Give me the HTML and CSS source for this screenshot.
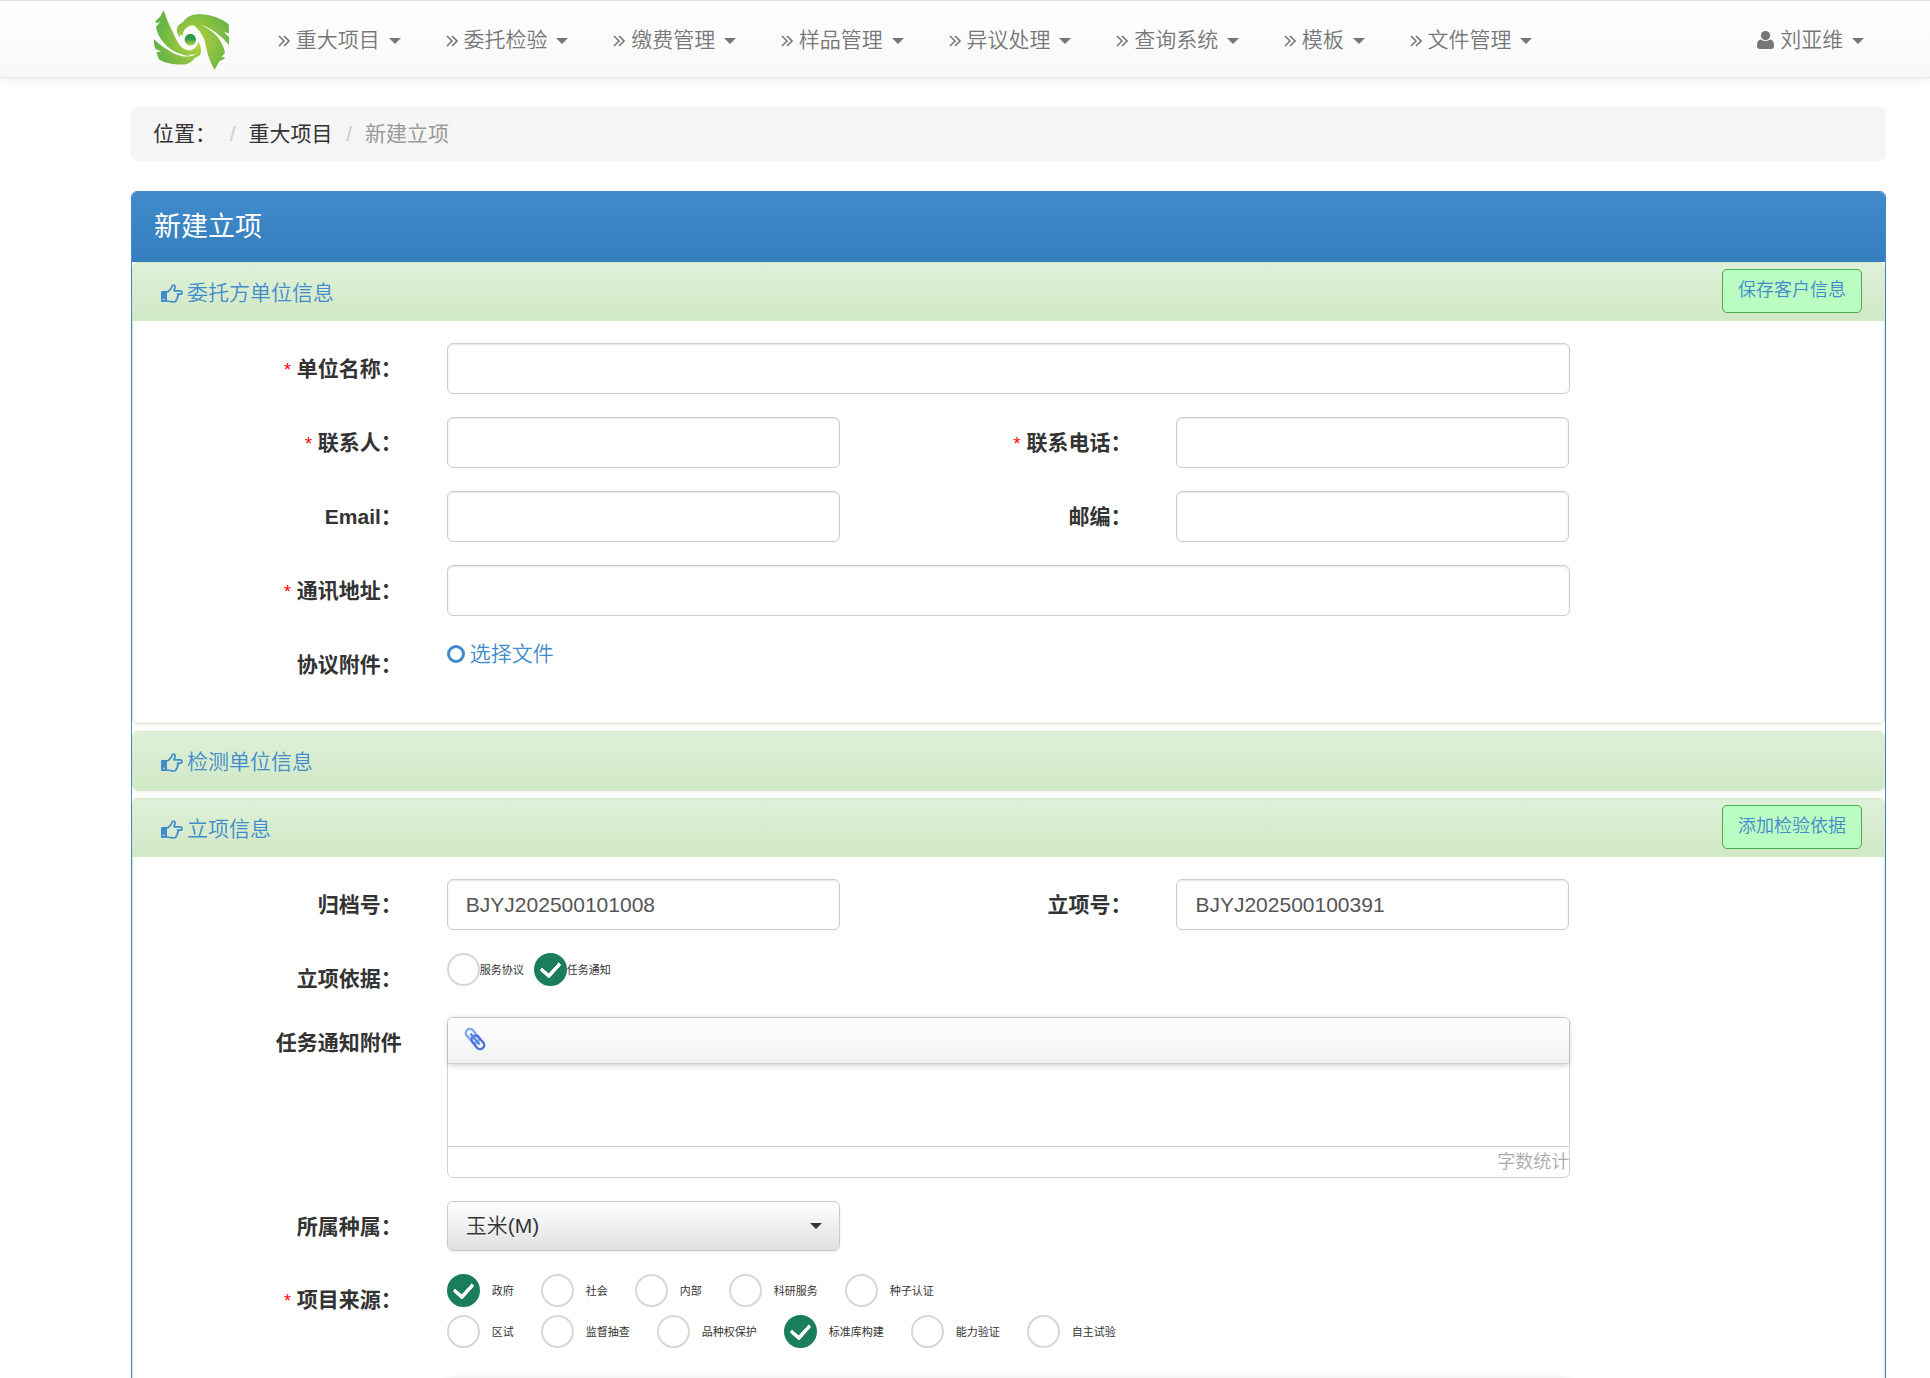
FILE: index.html
```html
<!DOCTYPE html>
<html lang="zh-CN">
<head>
    <meta charset="UTF-8">
    <meta name="viewport" content="width=device-width, initial-scale=1.0">
    <title>新建立项</title>
    <link rel="stylesheet" href="styles.css">
</head>
<body>
    <!-- shared icons -->
    <svg class="icon-defs" width="0" height="0">
        <symbol id="icon-angle" viewBox="0 0 12 12">
            <path d="M1 1l5 5-5 5M6 1l5 5-5 5" fill="none" stroke="currentColor" stroke-width="1.6"/>
        </symbol>
        <symbol id="icon-user" viewBox="0 0 17 18">
            <circle cx="8.5" cy="4.6" r="4.6" fill="currentColor"/>
            <path d="M4 8.6q4.500 3 9 0c3 .4 4 3 4 6.200q0 3.200-3 3.200H3q-3 0-3-3.200c0-3.200 1-5.800 4-6.200z" fill="currentColor"/>
        </symbol>
        <symbol id="icon-hand" viewBox="0 0 22 19">
            <path d="M0 8q0-1 1-1h5v11H1q-1 0-1-1z" fill="currentColor"/>
            <path d="M6 8c2-.2 3-2.200 4.200-3.800C11 3 10.800 1.200 12.400 1.200c2 0 2 2 1.300 3.600L13 6.800h6.200c2.400 0 2.400 3.400 0 3.400H16.500c1.200 1.200.8 2.500-.3 2.900.6 1.200 0 2.300-1 2.600.2 1.500-.8 2.300-2.500 2.300-2.700 0-4-1-6.700-1" fill="none" stroke="currentColor" stroke-width="1.700" stroke-linejoin="round"/>
            <circle cx="2.800" cy="15.200" r=".8" fill="#dff0d8"/>
        </symbol>
    </svg>

    <nav class="navbar">
        <a class="brand" href="#" aria-label="首页">
            <svg width="75" height="60" viewBox="42 30 225 180">
                <defs>
                    <radialGradient id="leaf" gradientUnits="userSpaceOnUse" cx="165" cy="125" r="110">
                        <stop offset="0" stop-color="#b9d33c"/>
                        <stop offset="1" stop-color="#69b545"/>
                    </radialGradient>
                    <linearGradient id="eye" x1="0" y1="0" x2="0" y2="1">
                        <stop offset="0.45" stop-color="#2f9a4a"/>
                        <stop offset="1" stop-color="#c5d83f"/>
                    </linearGradient>
                </defs>
                <path fill="url(#leaf)" d="M71 31L60 50 46 64l3 6 12-5-13 15c4 32 33 66 64 78 15 6 30 10 38 10-22-14-38-40-50-68C88 76 78 52 71 31z"/>
                <path fill="url(#leaf)" d="M42 117c12 14 42 36 69 47 25 9 49 7 61-6 4-8 4-20 3-34 9 16 10 31 5 41-8 5-16 8-20 14-14 15-32 16-54 14-21-2-41-8-50-16l-7-20 15-3-17-6c-5-9-6-19-5-31z"/>
                <path fill="url(#leaf)" d="M72 60c14 40 36 74 62 88 16 8 32 2 41-20 4 16 0 28-8 34-26 8-56-4-76-32C80 112 72 86 72 60z"/>
                <path fill="url(#leaf)" d="M224 209l14-25 15-8 1-5-10 1 11-14c-6-31-26-58-55-74-16-8-35-14-44-12 16 10 32 32 38 50 6 30 14 62 30 87z"/>
                <path fill="url(#leaf)" d="M267 135c-13-17-42-43-69-55-27-8-51-7-60 5-7 6-10 14-9 22l-8-4-1 9c-10-13-12-25-6-34 6-7 16-10 19-17 14-17 32-19 54-18 33 3 62 15 79 30l1 27-15-4 15 16z"/>
                <ellipse cx="151" cy="119" rx="17" ry="18" fill="url(#eye)"/>
            </svg>
        </a>
        <ul class="nav">
            <li><a href="#"><svg class="angle"><use href="#icon-angle"/></svg> 重大项目 <span class="caret"></span></a></li>
            <li><a href="#"><svg class="angle"><use href="#icon-angle"/></svg> 委托检验 <span class="caret"></span></a></li>
            <li><a href="#"><svg class="angle"><use href="#icon-angle"/></svg> 缴费管理 <span class="caret"></span></a></li>
            <li><a href="#"><svg class="angle"><use href="#icon-angle"/></svg> 样品管理 <span class="caret"></span></a></li>
            <li><a href="#"><svg class="angle"><use href="#icon-angle"/></svg> 异议处理 <span class="caret"></span></a></li>
            <li><a href="#"><svg class="angle"><use href="#icon-angle"/></svg> 查询系统 <span class="caret"></span></a></li>
            <li><a href="#"><svg class="angle"><use href="#icon-angle"/></svg> 模板 <span class="caret"></span></a></li>
            <li><a href="#"><svg class="angle"><use href="#icon-angle"/></svg> 文件管理 <span class="caret"></span></a></li>
        </ul>
        <ul class="nav nav-right">
            <li><a href="#"><svg class="user"><use href="#icon-user"/></svg> 刘亚维 <span class="caret"></span></a></li>
        </ul>
    </nav>

    <main class="container">
        <ol class="breadcrumb">
            <li>位置：</li>
            <li><a href="#">重大项目</a></li>
            <li class="active">新建立项</li>
        </ol>

        <form class="panel-primary">
            <h1 class="panel-title">新建立项</h1>

            <section class="panel">
                <div class="panel-heading">
                    <a href="#"><svg class="hand"><use href="#icon-hand"/></svg>委托方单位信息</a>
                    <button type="button" class="btn">保存客户信息</button>
                </div>
                <div class="panel-body">
                    <div class="form-group">
                        <label class="control-label" for="company"><span class="required">*</span> 单位名称：</label>
                        <div class="col-8"><input class="form-control" type="text" id="company"></div>
                    </div>
                    <div class="form-group">
                        <label class="control-label" for="contact"><span class="required">*</span> 联系人：</label>
                        <div class="col-3"><input class="form-control" type="text" id="contact"></div>
                        <label class="control-label" for="phone"><span class="required">*</span> 联系电话：</label>
                        <div class="col-3"><input class="form-control" type="text" id="phone"></div>
                    </div>
                    <div class="form-group">
                        <label class="control-label" for="email">Email：</label>
                        <div class="col-3"><input class="form-control" type="text" id="email"></div>
                        <label class="control-label" for="zip">邮编：</label>
                        <div class="col-3"><input class="form-control" type="text" id="zip"></div>
                    </div>
                    <div class="form-group">
                        <label class="control-label" for="address"><span class="required">*</span> 通讯地址：</label>
                        <div class="col-8"><input class="form-control" type="text" id="address"></div>
                    </div>
                    <div class="form-group">
                        <span class="control-label">协议附件：</span>
                        <div class="col-8"><a class="file-link" href="#"><span class="ring"></span>选择文件</a></div>
                    </div>
                </div>
            </section>

            <section class="panel">
                <div class="panel-heading">
                    <a href="#"><svg class="hand"><use href="#icon-hand"/></svg>检测单位信息</a>
                </div>
            </section>

            <section class="panel">
                <div class="panel-heading">
                    <a href="#"><svg class="hand"><use href="#icon-hand"/></svg>立项信息</a>
                    <button type="button" class="btn">添加检验依据</button>
                </div>
                <div class="panel-body">
                    <div class="form-group">
                        <label class="control-label" for="archiveNo">归档号：</label>
                        <div class="col-3"><input class="form-control" type="text" id="archiveNo" value="BJYJ202500101008"></div>
                        <label class="control-label" for="projectNo">立项号：</label>
                        <div class="col-3"><input class="form-control" type="text" id="projectNo" value="BJYJ202500100391"></div>
                    </div>
                    <div class="form-group">
                        <span class="control-label">立项依据：</span>
                        <div class="col-8 radios">
                            <label><input type="radio" name="basis">服务协议</label>
                            <label><input type="radio" name="basis" checked>任务通知</label>
                        </div>
                    </div>
                    <div class="form-group">
                        <label class="control-label" for="notice">任务通知附件</label>
                        <div class="col-8">
                            <div class="editor">
                                <div class="editor-toolbar">
                                    <button type="button" class="clip" aria-label="附件">
                                        <svg width="22" height="24" viewBox="0 0 22 24" fill="none" stroke-linecap="round">
                                            <g transform="rotate(-40 11 12)">
                                                <rect x="7" y="0" width="8" height="16" rx="4" stroke="#7fa9f3" stroke-width="2.400"/>
                                                <rect x="7" y="9" width="8" height="15" rx="4" stroke="#4a72d8" stroke-width="2.400"/>
                                                <path d="M11 6v12" stroke="#5b86e5" stroke-width="2.600"/>
                                            </g>
                                        </svg>
                                    </button>
                                </div>
                                <textarea id="notice"></textarea>
                                <div class="editor-footer">字数统计</div>
                            </div>
                        </div>
                    </div>
                    <div class="form-group">
                        <label class="control-label" for="species">所属种属：</label>
                        <div class="col-3">
                            <div class="select-wrap">
                                <select id="species">
                                    <option>玉米(M)</option>
                                </select>
                            </div>
                        </div>
                    </div>
                    <div class="form-group">
                        <span class="control-label"><span class="required">*</span> 项目来源：</span>
                        <div class="col-8 sources">
                            <div class="source-row">
                                <label><input type="checkbox" checked>政府</label>
                                <label><input type="checkbox">社会</label>
                                <label><input type="checkbox">内部</label>
                                <label><input type="checkbox">科研服务</label>
                                <label><input type="checkbox">种子认证</label>
                            </div>
                            <div class="source-row">
                                <label><input type="checkbox">区试</label>
                                <label><input type="checkbox">监督抽查</label>
                                <label><input type="checkbox">品种权保护</label>
                                <label><input type="checkbox" checked>标准库构建</label>
                                <label><input type="checkbox">能力验证</label>
                                <label><input type="checkbox">自主试验</label>
                            </div>
                        </div>
                    </div>
                    <div class="form-group">
                        <span class="control-label"></span>
                        <div class="col-8">
                            <div class="editor">
                                <div class="editor-toolbar"></div>
                                <textarea></textarea>
                            </div>
                        </div>
                    </div>
                </div>
            </section>
        </form>
    </main>
</body>
</html>
```
FILE: styles.css
```css
:root {
    --primary-color: #428bca;
    --text-color: #333;
    --muted-color: #777;
    --border-color: #ccc;
    --success-border: #d6e9c6;
    --check-color: #1b7e5a;
}

* {
    box-sizing: border-box;
}

body {
    margin: 0;
    height: 100vh;
    overflow: hidden;
    background: #fff;
    font-family: "Liberation Sans", "Noto Sans CJK SC", sans-serif;
    font-size: 21px;
    font-weight: 350;
    line-height: 30px;
    color: var(--text-color);
}

a {
    color: var(--primary-color);
    text-decoration: none;
}

ul, ol {
    list-style: none;
    margin: 0;
    padding: 0;
}

button, input, select, textarea {
    font: inherit;
    color: inherit;
}

.icon-defs {
    display: block;
}

/* navbar */
.navbar {
    display: flex;
    align-items: center;
    height: 78px;
    padding: 2px 44px 0 154px;
    border-top: 1px solid #e0e0e0;
    border-bottom: 1px solid #e5e5e5;
    background: linear-gradient(#fff, #f8f8f8);
    box-shadow: 0 2px 8px rgba(0, 0, 0, 0.07);
}

.brand {
    display: flex;
    margin-right: 26px;
}

.nav {
    display: flex;
}

.nav a {
    display: block;
    padding: 0 22px 0 23px;
    color: var(--muted-color);
    white-space: nowrap;
}

.nav-right {
    margin-left: auto;
}

.angle {
    width: 12px;
    height: 12px;
}

.user {
    width: 17px;
    height: 18px;
    vertical-align: -2px;
}

.caret {
    display: inline-block;
    margin-left: 3px;
    vertical-align: middle;
    border-top: 6px solid;
    border-left: 6px solid transparent;
    border-right: 6px solid transparent;
}

.container {
    padding: 29px 44px 0 131px;
}

/* breadcrumb */
.breadcrumb {
    padding: 12px 22px;
    margin-bottom: 30px;
    background: #f5f5f5;
    border-radius: 6px;
    font-weight: 400;
}

.breadcrumb li {
    display: inline-block;
}

.breadcrumb li + li::before {
    content: "/\00a0";
    padding: 0 7px 0 8px;
    color: var(--border-color);
}

.breadcrumb a {
    color: var(--text-color);
}

.breadcrumb .active {
    color: #999;
}

/* panels */
.panel-primary {
    border: 1px solid var(--primary-color);
    border-radius: 6px;
}

.panel-title {
    margin: 0;
    padding: 20px 22px;
    font-size: 27px;
    font-weight: 400;
    color: #fff;
    background: linear-gradient(var(--primary-color), #357ebd);
    border-radius: 5px 5px 0 0;
}

.panel {
    margin-bottom: 7px;
    border: 1px solid var(--success-border);
    border-radius: 6px;
    box-shadow: 0 1px 3px rgba(0, 0, 0, 0.07);
}

.panel-heading {
    display: flex;
    justify-content: space-between;
    align-items: flex-start;
    height: 58px;
    padding: 6px 22px 0 28px;
    background: linear-gradient(#dff0d8, #d0e9c6);
    border-radius: 5px 5px 0 0;
}

.panel-heading:last-child {
    border-radius: 5px;
}

.panel-heading a {
    display: flex;
    align-items: center;
    gap: 4px;
    padding-top: 9px;
}

.hand {
    width: 22px;
    height: 19px;
}

.btn {
    padding: 5px 15px 7px;
    border: 1px solid #44ae4b;
    border-radius: 5px;
    background: #bbfcc2;
    font-size: 18px;
    color: var(--primary-color);
}

.panel-body {
    padding: 22px 0 20px;
}

/* form */
.form-group {
    display: grid;
    grid-template-columns: repeat(12, 1fr);
    margin-bottom: 23px;
}

.control-label {
    grid-column: span 2;
    padding: 11px 23px 0 0;
    font-weight: bold;
    text-align: right;
}

.col-3 + .control-label {
    grid-column: 6 / span 2;
}

.required {
    font-size: 18px;
    font-weight: 400;
    color: #f00;
}

.col-3 {
    grid-column: span 3;
    padding: 0 23px 0 22px;
}

.col-8 {
    grid-column: span 8;
    padding: 0 22px;
}

.form-control {
    display: block;
    width: 100%;
    height: 51px;
    padding: 0 18px;
    border: 1px solid var(--border-color);
    border-radius: 6px;
    background: #fff;
    box-shadow: inset 0 1px 2px rgba(0, 0, 0, 0.1);
    color: #555;
}

.file-link {
    display: flex;
    align-items: center;
    gap: 5px;
}

.ring {
    width: 18px;
    height: 18px;
    border: 3px solid;
    border-radius: 50%;
}

/* round checks */
.radios, .source-row {
    display: flex;
    gap: 10px;
}

.radios label, .source-row label {
    display: flex;
    align-items: center;
    height: 33px;
    font-size: 11px;
    font-weight: 400;
}

.sources {
    display: grid;
    gap: 8px;
    padding-bottom: 7px;
}

.source-row {
    gap: 27px;
}

.source-row label {
    gap: 12px;
}

input[type="radio"], input[type="checkbox"] {
    appearance: none;
    display: grid;
    place-items: center;
    width: 33px;
    height: 33px;
    margin: 0;
    border: 2px solid #d9d7cf;
    border-radius: 50%;
    background: #fff;
}

input[type="radio"]:checked, input[type="checkbox"]:checked {
    border-color: var(--check-color);
    background: var(--check-color);
}

input[type="radio"]:checked::before, input[type="checkbox"]:checked::before {
    content: "";
    width: 9px;
    height: 15px;
    margin-bottom: 5px;
    border: solid #fff;
    border-width: 0 4px 4px 0;
    border-radius: 2px;
    transform: rotate(42deg);
}

/* editor */
.editor {
    border: 1px solid #d0d0d0;
    border-radius: 6px;
}

.editor-toolbar {
    height: 46px;
    padding: 9px 16px;
    border-bottom: 1px solid #d0d0d0;
    border-radius: 5px 5px 0 0;
    background: linear-gradient(#fff, #f1f1f1);
    box-shadow: 0 1px 6px rgba(0, 0, 0, 0.2);
}

.clip {
    display: block;
    padding: 0;
    border: 0;
    background: none;
}

.clip svg {
    display: block;
}

.editor textarea {
    display: block;
    width: 100%;
    height: 82px;
    border: 0;
    resize: none;
    background: transparent;
}

.editor-footer {
    height: 31px;
    border-top: 1px solid var(--border-color);
    font-size: 18px;
    text-align: right;
    color: #aaa;
}

/* select */
.select-wrap {
    position: relative;
}

.select-wrap::after {
    content: "";
    position: absolute;
    right: 18px;
    top: 22px;
    border-top: 6px solid #333;
    border-left: 6px solid transparent;
    border-right: 6px solid transparent;
    pointer-events: none;
}

select {
    appearance: none;
    display: block;
    width: 100%;
    height: 50px;
    padding: 0 18px;
    border: 1px solid var(--border-color);
    border-radius: 6px;
    background: linear-gradient(#fff, #e0e0e0);
    box-shadow: 0 1px 2px rgba(0, 0, 0, 0.08);
    text-shadow: 0 1px 0 #fff;
}
```
